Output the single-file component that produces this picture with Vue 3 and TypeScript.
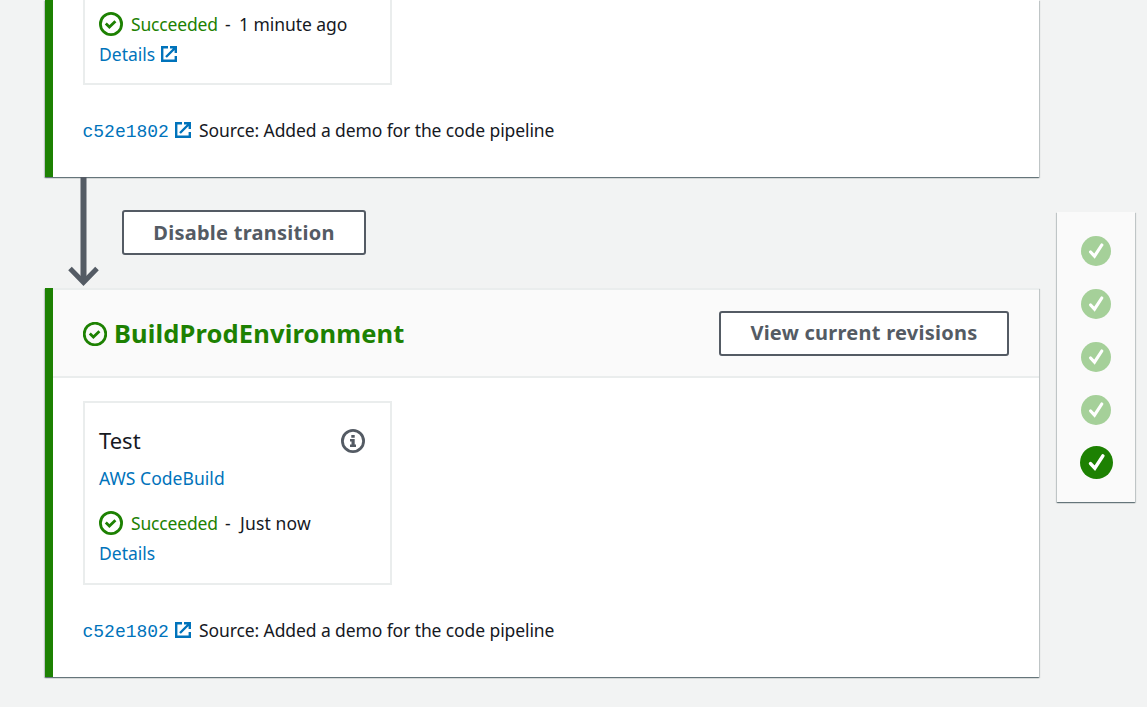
<script setup lang="ts">
interface Stage {
  id: string
  done: boolean
}

const commit = { id: 'c52e1802', message: 'Source: Added a demo for the code pipeline' }
const stages: Stage[] = [
  { id: 's1', done: false },
  { id: 's2', done: false },
  { id: 's3', done: false },
  { id: 's4', done: false },
  { id: 's5', done: true },
]
</script>

<template>
  <main class="page">
    <div class="pipeline">
      <section class="stage stage-first">
        <div class="action action-first">
          <div class="status">
            <svg class="ok" viewBox="0 0 24 24"><circle cx="12" cy="12" r="10.6" /><path d="M6.8 11.6l3.6 3.5 6-5.8" /></svg>
            <span class="t ok-text">Succeeded</span><span class="t dash">-</span><span class="t ago">1 minute ago</span>
          </div>
          <div class="details">
            <a class="t det">Details</a>
            <svg class="ext" viewBox="0 0 16 16"><path d="M7 1.2H1.2v13.6h13.6V10M9 1.2h5.8V7M14 2L5 11" /></svg>
          </div>
        </div>
        <div class="commit">
          <a class="sha">{{ commit.id }}</a>
          <svg class="ext" viewBox="0 0 16 16"><path d="M7 1.2H1.2v13.6h13.6V10M9 1.2h5.8V7M14 2L5 11" /></svg>
          <span class="t msg">{{ commit.message }}</span>
        </div>
      </section>

      <div class="transition">
        <svg class="arrow" viewBox="0 0 32 111"><path class="shaft" d="M16 0V105" /><path class="head" d="M2.5 91.5L16 105.3 29.5 91.5" /></svg>
        <button class="btn btn-transition"><span>Disable transition</span></button>
      </div>

      <section class="stage stage-second">
        <header class="head-bar">
          <svg class="ok" viewBox="0 0 24 24"><circle cx="12" cy="12" r="10.8" /><path d="M6.8 11.6l3.6 3.5 6-5.8" /></svg>
          <h2>BuildProdEnvironment</h2>
          <button class="btn btn-view"><span>View current revisions</span></button>
        </header>
        <div class="action">
          <div class="title-row">
            <span class="title">Test</span>
            <svg class="info" viewBox="0 0 24 24"><circle cx="12" cy="12" r="10.6" /><path d="M10.3 6h3.4v2.7h-3.4zM9 10h4.7v5.4H15V18H9v-2.6h1.5v-2.9H9z" /></svg>
          </div>
          <a class="provider"><span class="t prov">AWS CodeBuild</span></a>
          <div class="status">
            <svg class="ok" viewBox="0 0 24 24"><circle cx="12" cy="12" r="10.6" /><path d="M6.8 11.6l3.6 3.5 6-5.8" /></svg>
            <span class="t ok-text">Succeeded</span><span class="t dash">-</span><span class="t now">Just now</span>
          </div>
          <div class="details"><a class="t det">Details</a></div>
        </div>
        <div class="commit">
          <a class="sha">{{ commit.id }}</a>
          <svg class="ext" viewBox="0 0 16 16"><path d="M7 1.2H1.2v13.6h13.6V10M9 1.2h5.8V7M14 2L5 11" /></svg>
          <span class="t msg">{{ commit.message }}</span>
        </div>
      </section>
    </div>

    <aside class="rail">
      <div v-for="s in stages" :key="s.id" class="slot">
        <svg :class="['dot', { current: s.done }]" viewBox="0 0 30 30"><circle cx="15" cy="15" r="15" /><path d="M9.6 16l3.9 4.2L20.8 9" /></svg>
      </div>
    </aside>
  </main>
</template>

<style>
html, body { margin: 0; background: #f2f3f3; overflow: hidden; }
</style>

<style scoped>
* { box-sizing: border-box; }
.page {
  display: flex;
  gap: 18px;
  width: 1147px;
  height: 707px;
  padding-left: 45px;
  overflow: hidden;
  background: #f2f3f3;
  color: #16191f;
  font-family: "Noto Sans", sans-serif;
  font-size: 17.5px;
  font-stretch: 90%;
  line-height: 30px;
}
svg { display: block; flex: none; fill: none; }
.pipeline { width: 994px; flex: none; }
.stage {
  border-left: 8px solid #1d8102;
  background: #fff;
  box-shadow: 0 1px 1px 0 rgba(0, 28, 36, .42), 1px 1px 1px 0 rgba(0, 28, 36, .15), -1px 1px 1px 0 rgba(0, 28, 36, .15);
}
.stage-first { height: 177px; padding-left: 30px; }
.stage-second { height: 389px; }
.stage-second .action, .stage-second .commit { margin-left: 30px; }
.action { width: 309px; height: 184px; border: 2px solid #eaeded; padding: 22px 25px 0 14px; }
.stage-second .action { margin-top: 23px; }
.action-first { height: 85px; border-top: 0; padding-top: 9px; }
.status, .details, .commit { display: flex; align-items: center; height: 30px; white-space: nowrap; }
.ok { width: 24px; height: 24px; stroke: #1d8102; stroke-width: 2.8; }
.t { white-space: nowrap; }
.ok-text { color: #1d8102; margin-left: 8px; width: 86px; letter-spacing: -.18px; }
.dash { margin-left: 8px; width: 14px; }
.ago { letter-spacing: -.05px; }
.now { padding-left: 1px; letter-spacing: .15px; }
a { color: #0073bb; }
.det { width: 56px; }
.details .ext { margin-left: 6px; margin-top: -1px; }
.ext { width: 16px; height: 16px; margin-top: -2px; stroke: #0073bb; stroke-width: 2.4; }
.commit { margin-top: 31px; }
.sha { font: 18px/30px "Liberation Mono", monospace; width: 86px; margin-left: -.5px; padding-top: 1px; }
.commit .ext { margin-left: 6.5px; }
.msg { margin-left: 8px; padding-bottom: 2px; letter-spacing: -.1px; }
.transition { display: flex; height: 111px; padding-left: 22px; }
.arrow { width: 32px; height: 111px; margin-left: .5px; stroke: #545b64; transform: translateX(-.5px); }
.shaft { stroke-width: 6; }
.head { stroke-width: 5; }
.btn {
  display: flex;
  align-items: center;
  justify-content: center;
  height: 45px;
  padding: 0;
  border: 2px solid #545b64;
  border-radius: 3px;
  background: #fff;
  color: #545b64;
  font: 700 20px/30px "Noto Sans", sans-serif;
  letter-spacing: .26px;
  white-space: nowrap;
}
.btn-transition { width: 244px; margin: 33px 0 0 22.5px; }
.btn-view { width: 290px; margin-left: auto; }
.head-bar {
  display: flex;
  align-items: center;
  height: 90px;
  padding: 0 30px;
  border-top: 2px solid #eaeded;
  border-bottom: 2px solid #eaeded;
  background: #fafafa;
}
.head-bar .ok { margin-top: 2px; }
h2 { margin: 0 0 0 7px; color: #1d8102; font: 700 25.5px/36px "Noto Sans", sans-serif; letter-spacing: .13px; }
.title-row { display: flex; align-items: center; justify-content: space-between; height: 32px; }
.title { font-size: 22px; padding-bottom: 2px; }
.info { width: 24px; height: 24px; stroke: #545b64; stroke-width: 2.8; }
.info path { fill: #545b64; stroke: none; }
.provider { display: block; margin: 6px 0 15px; height: 30px; }
.prov { letter-spacing: .04px; }
.rail {
  width: 78px;
  height: 290px;
  margin-top: 212px;
  padding-top: 12px;
  background: #fafafa;
  box-shadow: 0 1px 1px 0 rgba(0, 28, 36, .42), 1px 1px 1px 0 rgba(0, 28, 36, .15), -1px 1px 1px 0 rgba(0, 28, 36, .15);
}
.slot { display: flex; align-items: center; justify-content: center; height: 53px; }
.dot { width: 30px; height: 30px; fill: #a5d099; }
.dot path { fill: none; stroke: #fff; stroke-width: 3.2; stroke-linecap: round; }
.dot.current { width: 33px; height: 33px; fill: #1d8102; }
</style>
